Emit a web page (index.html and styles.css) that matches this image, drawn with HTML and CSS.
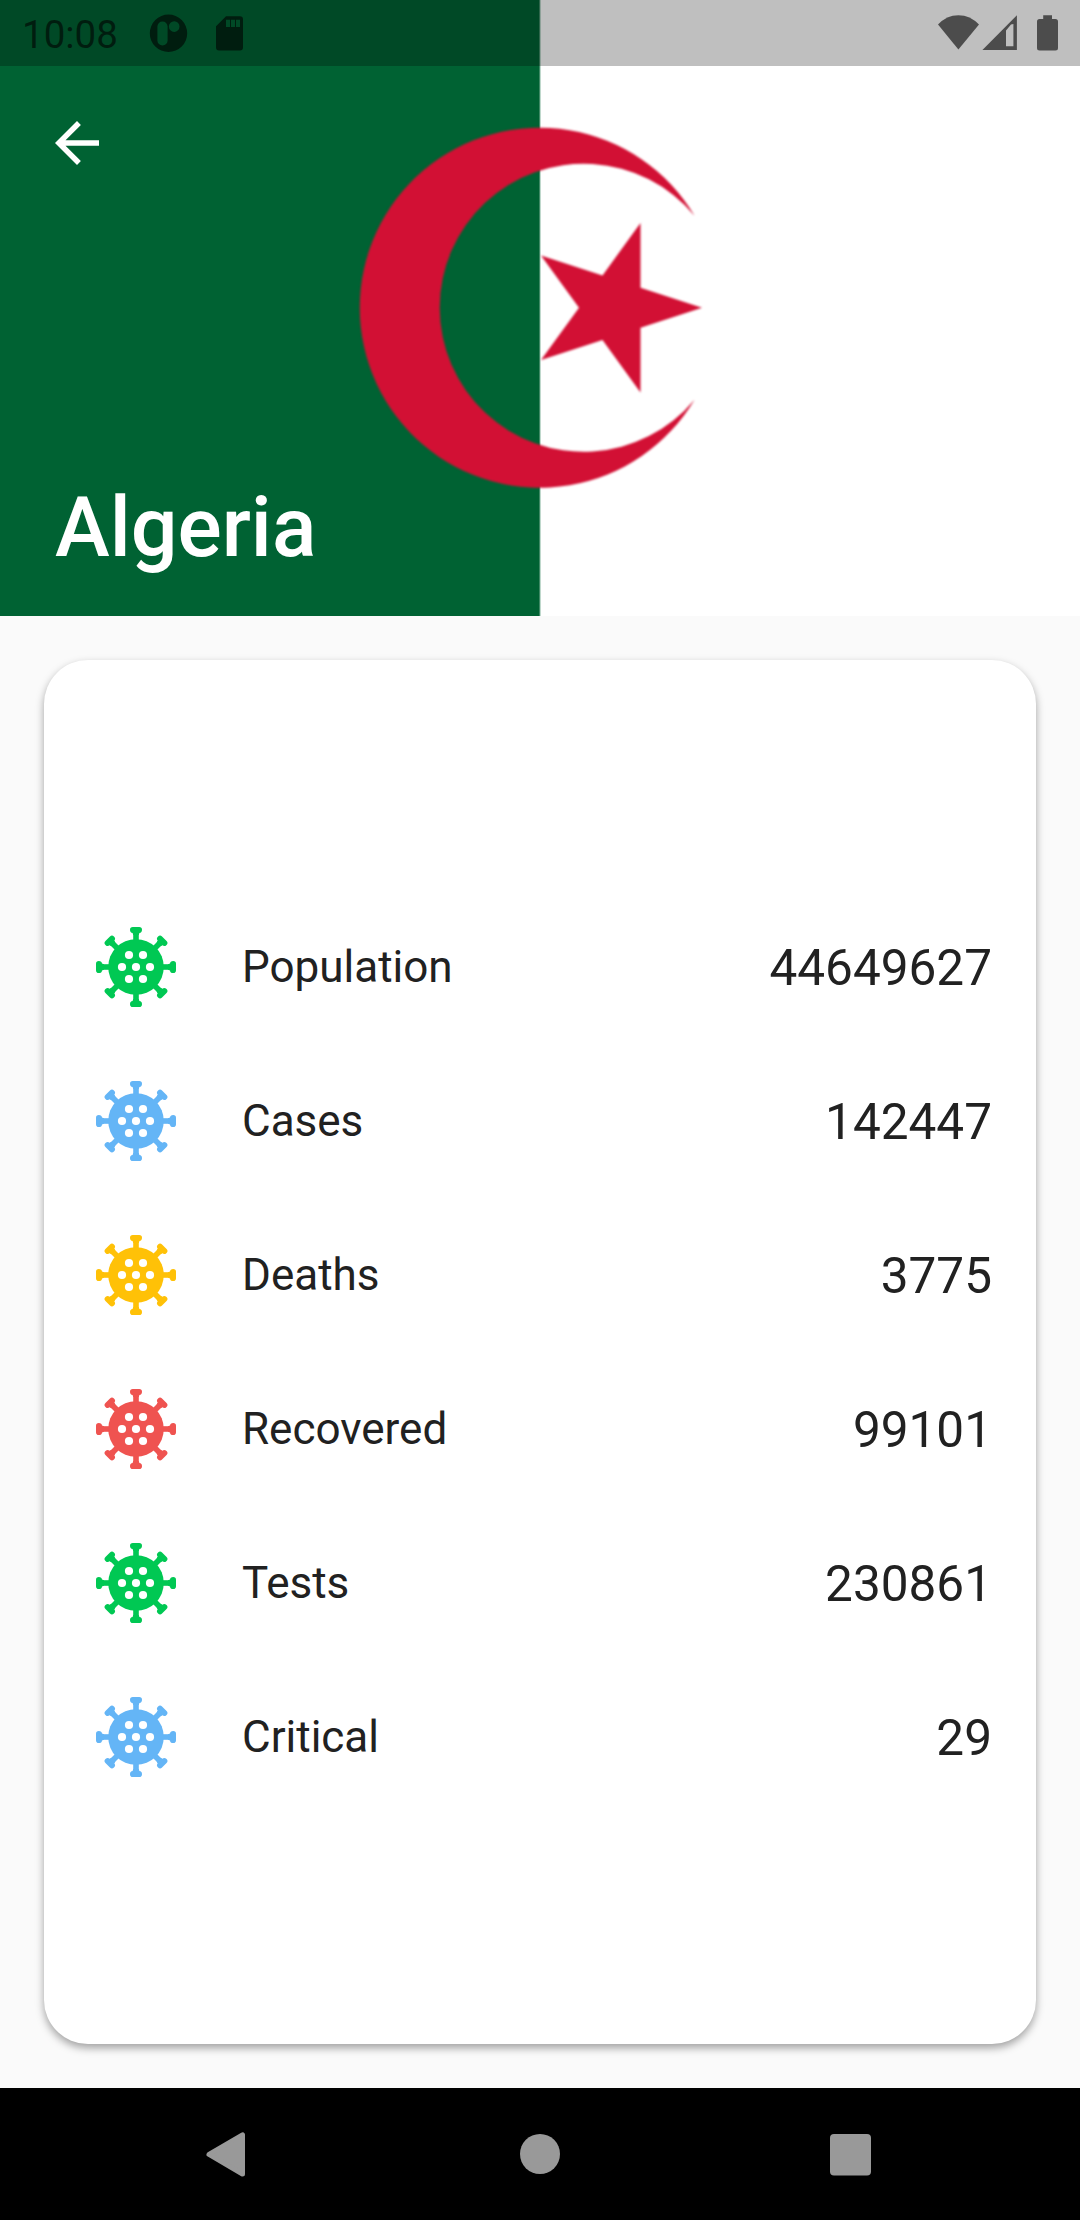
FILE: index.html
```html
<!DOCTYPE html>
<html lang="en">
<head>
<meta charset="utf-8">
<title>Algeria</title>
<link rel="stylesheet" href="styles.css">
</head>
<body>
<svg class="defs" width="0" height="0" aria-hidden="true">
  <symbol id="virus" viewBox="-44 -44 88 88">
    <g id="spikes">
      <g id="spike"><rect x="-2.8" y="-36" width="5.6" height="12"/><path d="M-6-37.2Q-6-40-3.2-40H3.2Q6-40 6-37.2Q6-34.2 3.4-34L2.8-32H-2.8L-3.4-34Q-6-34.2-6-37.2Z"/></g>
      <use href="#spike" transform="rotate(45)"/>
      <use href="#spike" transform="rotate(90)"/>
      <use href="#spike" transform="rotate(135)"/>
      <use href="#spike" transform="rotate(180)"/>
      <use href="#spike" transform="rotate(225)"/>
      <use href="#spike" transform="rotate(270)"/>
      <use href="#spike" transform="rotate(315)"/>
    </g>
    <circle r="27.8"/>
    <g fill="#fff">
      <circle r="4.1"/><circle cx="-14" r="4.1"/><circle cx="14" r="4.1"/>
      <circle cx="-7" cy="-12" r="4.1"/><circle cx="7" cy="-12" r="4.1"/>
      <circle cx="-7" cy="12" r="4.1"/><circle cx="7" cy="12" r="4.1"/>
    </g>
  </symbol>
</svg>
<div class="screen">
  <header class="hero">
    <svg class="flag" viewBox="0 0 1080 616">
      <rect width="1080" height="616" fill="#fff"/>
      <rect width="540" height="616" fill="#006233"/>
      <rect x="539" width="2" height="616" fill="#80b199" opacity=".5"/>
      <g class="emblem">
        <path d="M694.5 215.7A180 180 0 1 0 694.5 399.7A144 144 0 1 1 694.5 215.7Z"/>
        <path d="M702 307.7L640.5 287.7V223L602.5 275.4L541 255.4L579 307.7L541 360L602.5 340L640.5 392.4V327.7Z"/>
      </g>
    </svg>
    <div class="status">
      <span class="clock">10:08</span>
      <svg class="status-left" viewBox="149 0 96 66">
        <path fill-rule="evenodd" d="M149.8 33.3a18.7 18.7 0 1 1 37.4 0a18.7 18.7 0 1 1-37.4 0ZM157.4 26.5v14a5.1 5.1 0 0 0 10.2 0v-14a5.1 5.1 0 0 0-10.2 0ZM168.9 26.6a5.3 5.3 0 1 0 10.6 0a5.3 5.3 0 1 0-10.6 0Z"/>
        <path fill-rule="evenodd" d="M226 16.3H240Q243 16.3 243 19.3V47.5Q243 50.5 240 50.5H219Q216 50.5 216 47.5V26.3ZM226 19.7V27H230V19.7ZM231 19.7V27H235V19.7ZM236 19.7V27H240V19.7Z"/>
      </svg>
      <svg class="status-right" viewBox="936 0 124 66">
        <path d="M958.4 49.6L938 24.6Q946.5 15.2 958.4 15.2T979 24.6Z"/>
        <path fill-rule="evenodd" d="M982.4 50L1016.9 15.2V50ZM1006 46.2H1013.4V24L1011 24.4L1006 30.5Z"/>
        <path d="M1043.2 15.2H1052V19H1055.5Q1058 19 1058 21.5V48Q1058 50.5 1055.5 50.5H1039.5Q1037 50.5 1037 48V21.5Q1037 19 1039.5 19H1043.2Z"/>
      </svg>
    </div>
    <div class="toolbar">
      <svg class="back" viewBox="0 0 24 24"><path d="M20 11H7.83l5.59-5.59L12 4l-8 8 8 8 1.41-1.41L7.83 13H20v-2z"/></svg>
    </div>
    <h1 class="title">Algeria</h1>
  </header>
  <main class="content">
    <section class="card">
      <div class="row"><svg class="virus green"><use href="#virus"/></svg><span class="label">Population</span><span class="value">44649627</span></div>
      <div class="row"><svg class="virus blue"><use href="#virus"/></svg><span class="label">Cases</span><span class="value">142447</span></div>
      <div class="row"><svg class="virus amber"><use href="#virus"/></svg><span class="label">Deaths</span><span class="value">3775</span></div>
      <div class="row"><svg class="virus red"><use href="#virus"/></svg><span class="label">Recovered</span><span class="value">99101</span></div>
      <div class="row"><svg class="virus green"><use href="#virus"/></svg><span class="label">Tests</span><span class="value">230861</span></div>
      <div class="row"><svg class="virus blue"><use href="#virus"/></svg><span class="label">Critical</span><span class="value">29</span></div>
    </section>
  </main>
  <nav class="navbar">
    <svg viewBox="-30 -30 60 60"><path class="triangle" d="M-21 .4L12.5-19.2V20Z"/></svg>
    <svg viewBox="-30 -30 60 60"><circle r="20"/></svg>
    <svg viewBox="-30 -30 60 60"><rect x="-20" y="-20" width="41" height="41.5" rx="4"/></svg>
  </nav>
</div>
</body>
</html>
```
FILE: styles.css
```css
* { box-sizing: border-box; }
body { margin: 0; font-family: Roboto, sans-serif; color: #212121; }
.defs { position: absolute; }
.screen { width: 1080px; height: 2220px; display: flex; flex-direction: column; background: #fafafa; }

.hero { position: relative; height: 616px; display: flex; flex-direction: column; isolation: isolate; }
.flag { position: absolute; inset: 0; width: 1080px; height: 616px; z-index: -1; }
.emblem { fill: #d21034; filter: blur(0.8px); }

.status { height: 66px; display: flex; align-items: center; padding: 0 20px 0 22px; background: rgba(0, 0, 0, .25); color: rgba(0, 0, 0, .6); fill: rgba(0, 0, 0, .6); }
.clock { width: 127px; font-size: 38.5px; line-height: 66px; padding-top: 3px; }
.status-left { width: 96px; height: 66px; }
.status-right { width: 124px; height: 66px; margin-left: auto; }

.toolbar { height: 154px; display: flex; align-items: center; padding-left: 44px; }
.back { width: 66px; height: 66px; fill: #fff; }
.title { margin: auto 0 44px 55px; font-size: 82.5px; line-height: 88px; font-weight: 500; color: #fff; }

.content { flex: 1; padding: 44px; display: flex; }
.card { flex: 1; display: flex; flex-direction: column; justify-content: center; background: #fff; border-radius: 44px; box-shadow: 0 4px 8px rgba(0, 0, 0, .36); }
.row { height: 154px; padding: 0 44px 0 48px; display: flex; align-items: center; }
.virus { width: 88px; height: 88px; }
.label { margin-left: 62px; font-size: 44px; }
.value { margin-left: auto; font-size: 49.5px; padding-top: 1px; }
.green { fill: #00c853; }
.blue { fill: #64b5f6; }
.amber { fill: #ffc107; }
.red { fill: #ef5350; }

.navbar { height: 132px; background: #000; fill: #999; display: flex; align-items: center; justify-content: center; gap: 250px; }
.navbar svg { width: 60px; height: 60px; }
.triangle { stroke: #999; stroke-width: 5; stroke-linejoin: round; }
```
